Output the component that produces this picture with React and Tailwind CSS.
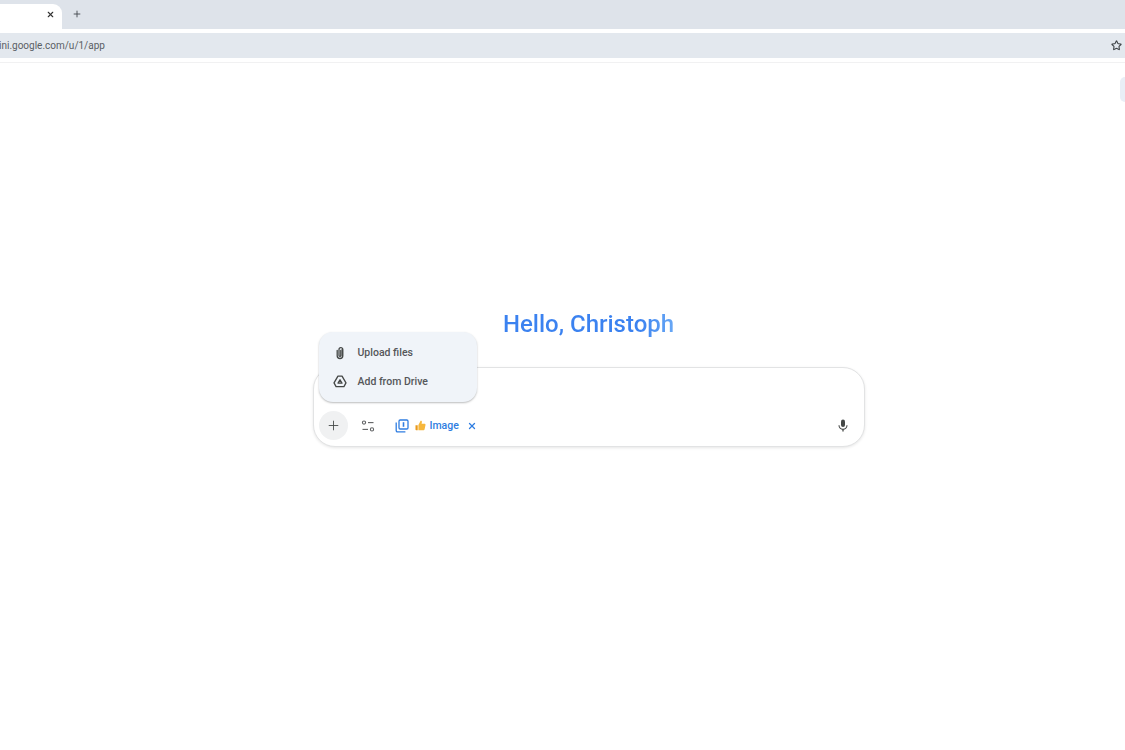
import React from 'react';
import { X, Plus, Star } from 'lucide-react';

const font = { fontFamily: 'Roboto, "Noto Sans", sans-serif' };

const PaperclipIcon = () => (
    <svg width="14" height="14" viewBox="0 0 14 14" fill="none" stroke="#444746" strokeWidth="1.3" strokeLinecap="round">
        <path d="M4.2 4.5v5.2a2.8 2.8 0 0 0 5.6 0V3.6a1.9 1.9 0 0 0-3.8 0v5.8a.9.9 0 0 0 1.8 0V4.5" />
        <path d="M9.2 3.5v6.4" />
    </svg>
);

const DriveIcon = () => (
    <svg width="15" height="15" viewBox="0 0 15 15" fill="none" stroke="#444746" strokeWidth="1.4" strokeLinejoin="round">
        <path d="M5.3 1.8h4.4l4.2 7.2-2.2 4H3.3l-2.2-4z" />
        <path d="M7.5 5.6 5.4 9.3h4.2z" />
    </svg>
);

const ToolsIcon = () => (
    <svg width="14" height="14" viewBox="0 0 14 14" fill="none" stroke="#5f6163" strokeWidth="1.1">
        <circle cx="3" cy="3.6" r="1.6" />
        <path d="M7 3.6h5.5" />
        <circle cx="11" cy="10.4" r="1.6" />
        <path d="M1.5 10.4H7" />
    </svg>
);

const ImagesIcon = () => (
    <svg width="14" height="14" viewBox="0 0 14 14" fill="none" stroke="#2f7de1" strokeWidth="1.3" strokeLinejoin="round">
        <rect x="4" y="1" width="9" height="9" rx="1.2" />
        <path d="M1.2 3.6v8a1.2 1.2 0 0 0 1.2 1.2h8" />
        <path d="M8.5 3.2v4.6" strokeWidth="1.6" />
    </svg>
);

const ThumbIcon = () => (
    <svg width="11" height="11" viewBox="0 0 11 11">
        <path d="M0.5 5.2h2.2v5H1.2a.7.7 0 0 1-.7-.7z" fill="#ea9a1c" />
        <path d="M3.4 5 5.6 .8c.8-.2 1.4.4 1.3 1.2L6.6 3.8h2.9c.7 0 1.2.6 1 1.3l-.9 4.2c-.1.5-.5.9-1 .9H3.4z" fill="#f6b73c" />
    </svg>
);

const MicIcon = () => (
    <svg width="10" height="13" viewBox="0 0 10 13" fill="none">
        <rect x="3" y="0.5" width="4" height="7.5" rx="2" fill="#444746" />
        <path d="M1 6.2a4 4 0 0 0 8 0" stroke="#444746" strokeWidth="1.1" />
        <path d="M5 10v2.5" stroke="#444746" strokeWidth="1.3" />
    </svg>
);

const MenuRow = ({ icon, label }) => (
    <div className="flex items-center h-[29px] pl-[14px]">
        <span className="w-[14px] flex justify-center">{icon}</span>
        <span className="ml-[11px] text-[10.5px] font-medium text-[#55575a]">{label}</span>
    </div>
);

export default function App() {
    return (
        <div className="relative h-[750px] overflow-hidden bg-white" style={font}>
            {/* Browser tabs */}
            <div className="h-[29px] bg-[#dee3ea] flex items-start">
                <div className="mt-[4px] w-[62px] h-[25px] bg-white rounded-tr-[9px] flex items-start justify-end pr-[7px] pt-[6px]">
                    <X size={9} strokeWidth={3} className="text-[#333]" />
                </div>
                <div className="ml-[10px] mt-[9px]">
                    <Plus size={10} strokeWidth={2.2} className="text-[#45494f]" />
                </div>
            </div>

            {/* Address bar */}
            <div className="mt-[4px] h-[25px] bg-[#e3e8ee] flex items-center justify-between pr-[3px]">
                <span className="text-[10px] text-[#5a5e64] -ml-[1px]">ini.google.com/u/1/app</span>
                <Star size={11} strokeWidth={2.4} className="text-[#3f4347]" />
            </div>
            <div className="mt-[4px] h-px bg-[#f1f1f2]" />

            {/* Side tab peeking in from the right */}
            <div className="absolute right-0 top-[77px] w-[5px] h-[25px] bg-[#e9eef6] rounded-l-[5px]" />

            {/* Chat area */}
            <div className="flex flex-col items-center pt-[246px] pl-[52px]">
                <h1 className="h-[30px] text-[24px] font-medium leading-[30px] text-transparent bg-clip-text bg-gradient-to-r from-[#3b82f0] from-80% to-[#69a8f5]">
                    Hello, Christoph
                </h1>

                <div className="relative mt-[28px] w-[552px] h-[80px] rounded-[22px] border border-[#e2e3e4] shadow-[0_1px_3px_rgba(0,0,0,0.1)] bg-white flex items-end justify-between pb-[6px] pl-[5px] pr-[16px]">
                    <div className="flex items-center">
                        <div className="w-[29px] h-[29px] rounded-full bg-[#f0f1f2] flex items-center justify-center">
                            <Plus size={15} strokeWidth={1.4} className="text-[#444746]" />
                        </div>
                        <div className="ml-[13px]">
                            <ToolsIcon />
                        </div>
                        <div className="ml-[20px] flex items-center">
                            <ImagesIcon />
                        </div>
                        <div className="ml-[6px] flex items-center">
                            <ThumbIcon />
                        </div>
                        <span className="ml-[4px] text-[10.5px] font-medium text-[#2f7de1]">Image</span>
                        <X size={10} strokeWidth={3} className="ml-[8px] text-[#2f7de1]" />
                    </div>
                    <div className="pb-[8px]">
                        <MicIcon />
                    </div>

                    {/* Upload menu */}
                    <div className="absolute left-[5px] -top-[36px] w-[158px] h-[70px] rounded-[14px] bg-[#f0f4f9] shadow-[0_1px_2px_rgba(60,64,67,0.35)] flex flex-col justify-center">
                        <MenuRow icon={<PaperclipIcon />} label="Upload files" />
                        <MenuRow icon={<DriveIcon />} label="Add from Drive" />
                    </div>
                </div>
            </div>
        </div>
    );
}
